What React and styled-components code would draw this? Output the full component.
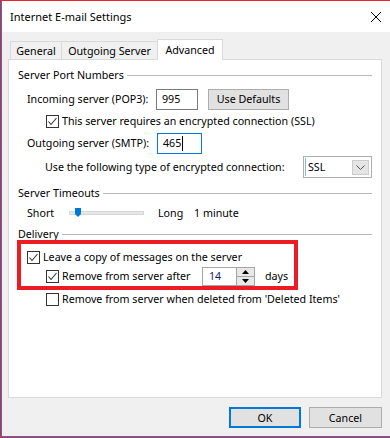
import React from "react"
import styled, { createGlobalStyle } from "styled-components"

const Global = createGlobalStyle`
  html, body { margin: 0; padding: 0; background: #fff; }
  body { font-family: "Noto Sans", "Open Sans", sans-serif; font-size: 10.7px; color: #000; }
  * { box-sizing: border-box; }
`

const Frame = styled.div`
  width: 390px;
  height: 438px;
  border: 1px solid #e8232b;
  display: flex;
`

const Window = styled.div`
  flex: 1;
  display: flex;
  flex-direction: column;
  border-left: 1px solid #2b7bd3;
  border-right: 1px solid #2b7bd3;
  border-bottom: 1px solid #2b7bd3;
  background: #f0f0f0;
`

const TitleBar = styled.div`
  height: 31px;
  background: #fff;
  display: flex;
  align-items: center;
  justify-content: space-between;
  padding: 0 9px 0 8px;
  font-size: 11px;
`

const Body = styled.div`
  flex: 1;
  display: flex;
  flex-direction: column;
  padding: 7px 8px 8px 6px;
`

const TabRow = styled.div`
  display: flex;
  align-items: flex-start;
  height: 21px;
  margin-bottom: -1px;
  padding-left: 2px;
  position: relative;
  z-index: 1;
`

const Tab = styled.div`
  height: ${p => (p.active ? 21 : 18)}px;
  margin-top: ${p => (p.active ? 0 : 2)}px;
  margin-left: ${p => (p.first ? 0 : -1)}px;
  width: ${p => p.w}px;
  border: 1px solid #d9d9d9;
  border-bottom: none;
  background: ${p => (p.active ? "#fff" : "#f0f0f0")};
  display: flex;
  align-items: center;
  justify-content: center;
  padding-top: ${p => (p.active ? 0 : 1)}px;
`

const Panel = styled.div`
  flex: 1;
  background: #fff;
  border: 1px solid #d9d9d9;
  padding: 7px 9px 0 9px;
  display: flex;
  flex-direction: column;
`

const GroupHeader = styled.div`
  display: flex;
  align-items: center;
  height: 16px;
  margin-top: ${p => p.mt || 0}px;
  &::after {
    content: "";
    flex: 1;
    height: 1px;
    margin-left: 3px;
    background: #b9b9b9;
  }
`

const Row = styled.div`
  display: flex;
  align-items: center;
  height: ${p => p.h}px;
  margin-top: ${p => p.mt || 0}px;
  padding-left: ${p => p.indent || 0}px;
`

const Label = styled.span`
  width: ${p => p.w}px;
  flex-shrink: 0;
  white-space: nowrap;
  margin-left: ${p => p.ml || 0}px;
`

const TextBox = styled.div`
  width: ${p => p.w}px;
  height: 21px;
  border: 1px solid ${p => (p.focused ? "#0078d7" : "#7a7a7a")};
  background: #fff;
  display: flex;
  align-items: center;
  padding-left: 5px;
`

const Caret = styled.span`
  display: inline-block;
  width: 1px;
  height: 15px;
  background: #000;
  margin-left: 1px;
`

const Button = styled.div`
  width: ${p => p.w}px;
  height: 21px;
  margin-left: ${p => p.ml || 0}px;
  background: #e1e1e1;
  border: ${p => (p.primary ? "2px solid #0078d7" : "1px solid #adadad")};
  display: flex;
  align-items: center;
  justify-content: center;
`

const Box = styled.span`
  width: 13px;
  height: 13px;
  flex-shrink: 0;
  border: 1px solid #333;
  background: #fff;
  display: inline-flex;
  align-items: center;
  justify-content: center;
  margin-right: 3px;
`

const Select = styled.div`
  width: 69px;
  height: 22px;
  border: 1px solid #adadad;
  background: #fff;
  display: flex;
  align-items: center;
  padding: 1px;
`

const SelectValue = styled.span`
  flex: 1;
  border-left: 1px solid #8cb4e0;
  padding-left: 2px;
  height: 18px;
  display: flex;
  align-items: center;
`

const DropButton = styled.span`
  width: 17px;
  height: 15px;
  margin-right: 1px;
  background: #e5e5e5;
  border: 1px solid #cccccc;
  display: flex;
  align-items: center;
  justify-content: center;
`

const Track = styled.div`
  position: relative;
  width: 75px;
  height: 4px;
  background: #e7e7e7;
  border: 1px solid #d6d6d6;
`

const Thumb = styled.svg`
  position: absolute;
  left: 5px;
  top: -4px;
`

const Highlight = styled.div`
  width: 281px;
  margin-left: -1px;
  margin-top: -2px;
  border: 4px solid #ec1c24;
  padding: 3px 0 1px 0;
`

const Spin = styled.div`
  width: 53px;
  height: 19px;
  border: 1px solid #a5a5a5;
  display: flex;
  background: #fff;
`

const SpinText = styled.span`
  flex: 1;
  color: #1e1e6e;
  padding-left: 6px;
  display: flex;
  align-items: center;
`

const SpinButtons = styled.div`
  width: 18px;
  display: flex;
  flex-direction: column;
  border-left: 1px solid #a5a5a5;
`

const SpinButton = styled.span`
  flex: 1;
  background: #e8e8e8;
  display: flex;
  align-items: center;
  justify-content: center;
  & + & { border-top: 1px solid #a5a5a5; }
`

const Footer = styled.div`
  display: flex;
  justify-content: flex-end;
  gap: 8px;
  margin-top: 9px;
`

const Check = ({ checked, children, w }) => (
  <>
    <Box>
      {checked && (
        <svg width="11" height="11" viewBox="0 0 11 11">
          <path d="M1.5 5.5 L4 8.5 L9.5 2" fill="none" stroke="#333" strokeWidth="1.1" />
        </svg>
      )}
    </Box>
    <Label w={w}>{children}</Label>
  </>
)

const Arrow = ({ up }) => (
  <svg width="7" height="4" viewBox="0 0 7 4">
    <path d={up ? "M0 4 L3.5 0 L7 4 Z" : "M0 0 L7 0 L3.5 4 Z"} fill="#000" />
  </svg>
)

export default function App() {
  return (
    <>
      <Global />
      <Frame>
        <Window>
          <TitleBar>
            <span>Internet E-mail Settings</span>
            <svg width="10" height="10" viewBox="0 0 10 10">
              <path d="M0 0 L10 10 M10 0 L0 10" stroke="#000" strokeWidth="1" />
            </svg>
          </TitleBar>
          <Body>
            <TabRow>
              <Tab first w={52}>General</Tab>
              <Tab w={97}>Outgoing Server</Tab>
              <Tab active w={66}>Advanced</Tab>
            </TabRow>
            <Panel>
              <GroupHeader>Server Port Numbers</GroupHeader>
              <Row h={22} mt={5} indent={9}>
                <Label w={129}>Incoming server (POP3):</Label>
                <TextBox w={42}>995</TextBox>
                <Button w={81} ml={10}>Use Defaults</Button>
              </Row>
              <Row h={22} indent={28}>
                <Check checked>This server requires an encrypted connection (SSL)</Check>
              </Row>
              <Row h={22} indent={9}>
                <Label w={130}>Outgoing server (SMTP):</Label>
                <TextBox w={45} focused>465<Caret /></TextBox>
              </Row>
              <Row h={24} mt={1} indent={27}>
                <Label w={258}>Use the following type of encrypted connection:</Label>
                <Select>
                  <SelectValue>SSL</SelectValue>
                  <DropButton>
                    <svg width="9" height="5" viewBox="0 0 9 5">
                      <path d="M0.5 0.5 L4.5 4.5 L8.5 0.5" fill="none" stroke="#555" strokeWidth="1" />
                    </svg>
                  </DropButton>
                </Select>
              </Row>
              <GroupHeader mt={6}>Server Timeouts</GroupHeader>
              <Row h={20} mt={2} indent={9}>
                <Label w={42}>Short</Label>
                <Track>
                  <Thumb width="6" height="9" viewBox="0 0 6 9">
                    <path d="M0 0 H6 V6 L3 9 L0 6 Z" fill="#0078d7" />
                  </Thumb>
                </Track>
                <Label w={36} ml={14}>Long</Label>
                <span>1 minute</span>
              </Row>
              <GroupHeader mt={3}>Delivery</GroupHeader>
              <Highlight>
                <Row h={20} indent={6}>
                  <Check checked>Leave a copy of messages on the server</Check>
                </Row>
                <Row h={18} indent={25}>
                  <Check checked w={140}>Remove from server after</Check>
                  <Spin>
                    <SpinText>14</SpinText>
                    <SpinButtons>
                      <SpinButton><Arrow up /></SpinButton>
                      <SpinButton><Arrow /></SpinButton>
                    </SpinButtons>
                  </Spin>
                  <Label ml={10}>days</Label>
                </Row>
              </Highlight>
              <Row h={18} indent={28}>
                <Check>Remove from server when deleted from 'Deleted Items'</Check>
              </Row>
            </Panel>
            <Footer>
              <Button w={72} primary>OK</Button>
              <Button w={73}>Cancel</Button>
            </Footer>
          </Body>
        </Window>
      </Frame>
    </>
  )
}
